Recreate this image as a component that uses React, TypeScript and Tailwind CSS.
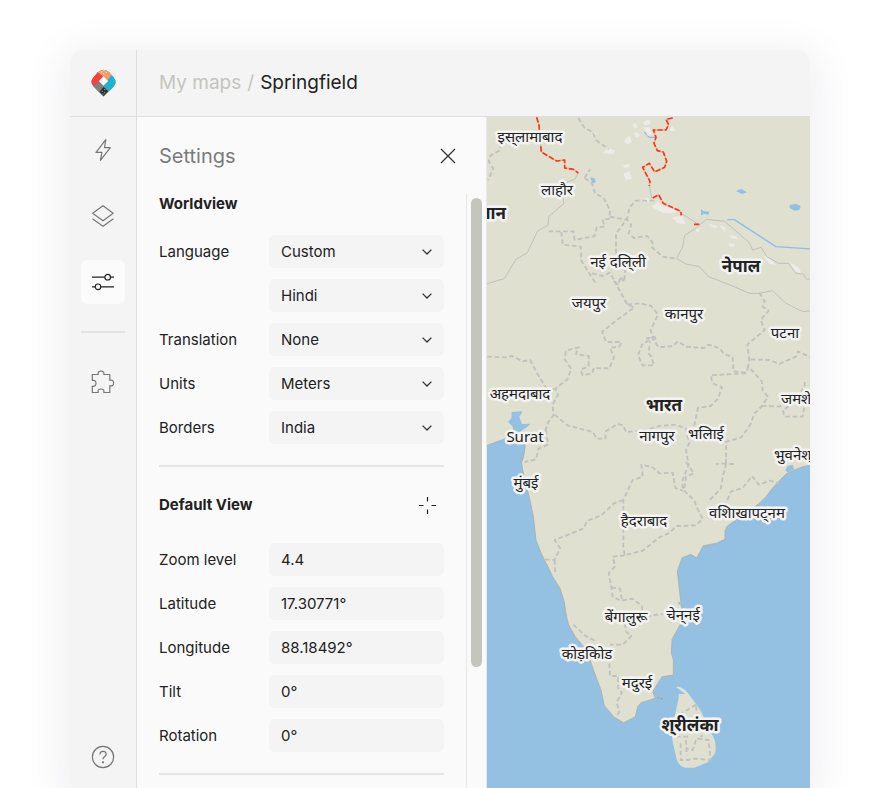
import { useState } from "react";
import type { ReactNode } from "react";

type Label = { text: string; x: number; y: number; bold?: boolean; anchor?: "start" | "middle" | "end" };

const worldview = [
  { id: "language", label: "Language", options: ["Custom", "Automatic"] },
  { id: "custom-language", label: "", options: ["Hindi", "English", "German"] },
  { id: "translation", label: "Translation", options: ["None", "Latin"] },
  { id: "units", label: "Units", options: ["Meters", "Feet"] },
  { id: "borders", label: "Borders", options: ["India", "China", "International"] },
];

const defaultView = [
  { id: "zoom", label: "Zoom level", value: "4.4" },
  { id: "latitude", label: "Latitude", value: "17.30771°" },
  { id: "longitude", label: "Longitude", value: "88.18492°" },
  { id: "tilt", label: "Tilt", value: "0°" },
  { id: "rotation", label: "Rotation", value: "0°" },
];

// \u200c keeps the halant visible instead of forming a conjunct
const labels: Label[] = [
  { text: "इस्\u200cलामाबाद", x: 43, y: 25 },
  { text: "लाहौर", x: 70, y: 78 },
  { text: "पाकिस्तान", x: 19, y: 102, bold: true, anchor: "end" },
  { text: "नई दलि्ली", x: 131, y: 150 },
  { text: "नेपाल", x: 254, y: 155, bold: true },
  { text: "जयपुर", x: 102, y: 191 },
  { text: "कानपुर", x: 197, y: 202 },
  { text: "पटना", x: 298, y: 221 },
  { text: "अहमदाबाद", x: 33, y: 282 },
  { text: "भारत", x: 177, y: 294, bold: true },
  { text: "जमशेदपुर", x: 294, y: 287, anchor: "start" },
  { text: "Surat", x: 38, y: 325 },
  { text: "नागपुर", x: 170, y: 324 },
  { text: "भलिाई", x: 219, y: 322 },
  { text: "भुवनेश्\u200cवर", x: 287, y: 343, anchor: "start" },
  { text: "मुंबई", x: 39, y: 371 },
  { text: "हैदराबाद", x: 157, y: 409 },
  { text: "वशिाखापट्\u200cनम", x: 260, y: 401 },
  { text: "बेंगालुरू", x: 139, y: 505 },
  { text: "चेन्\u200cनई", x: 196, y: 503 },
  { text: "कोड़किोड", x: 100, y: 542 },
  { text: "मदुरई", x: 150, y: 571 },
  { text: "श्\u200cरीलंका", x: 203, y: 614, bold: true },
];

function Logo() {
  return (
    <svg viewBox="0 0 74 84" className="h-7 w-[25px]" aria-hidden="true">
      <path d="M37 83L7 53Q-5 40 6 26L20 10Q37-6 54 10L68 26Q79 40 67 53Z" fill="#808080" />
      <path d="M20 10L6 26Q-3 37 4 48H12L25 35L37 23Z" fill="#fb3f3b" />
      <path d="M20 10Q37-6 54 10L62 19L49 34L37 23Z" fill="#f39c66" />
      <path d="M62 19L68 26Q79 40 67 53L52 67L37 51Z" fill="#19b5d3" />
      <path d="M37 54L51 67L37 81L25 68Z" fill="#2c2c2c" />
      <path d="M37 22L51 36L37 50L23 36Z" fill="#fbfbf8" />
      <path d="M29 9h3M37 5h3M44 10h3M36 14h3" stroke="#fff" strokeWidth="3" />
      <path d="M32 67h3M39 62h3M39 71h3M34 75h3" stroke="#bbb" strokeWidth="3" />
    </svg>
  );
}

function Icon({ children, className = "" }: { children: ReactNode; className?: string }) {
  return (
    <svg
      viewBox="0 0 24 24"
      fill="none"
      stroke="currentColor"
      strokeWidth="1.2"
      strokeLinejoin="round"
      className={`size-6 ${className}`}
      aria-hidden="true"
    >
      {children}
    </svg>
  );
}

function NavButton({ label, active, onClick, children }: { label: string; active: boolean; onClick: () => void; children: ReactNode }) {
  return (
    <button
      type="button"
      aria-label={label}
      onClick={onClick}
      className={`flex size-11 items-center justify-center rounded-md ${active ? "bg-[#fbfbfb] text-[#222]" : "text-[#777]"}`}
    >
      {children}
    </button>
  );
}

function Sidebar() {
  const [active, setActive] = useState("settings");
  return (
    <nav className="flex w-[67px] shrink-0 flex-col items-center border-r border-[#dedede] pt-[11px] pb-[9px]">
      <div className="flex flex-col gap-[22px]">
        <NavButton label="Quick actions" active={active === "quick"} onClick={() => setActive("quick")}>
          <Icon><path d="M14.8 1.6L5 14.4H10.9L9.4 22.4L19.3 9.6H13.5Z" /></Icon>
        </NavButton>
        <NavButton label="Layers" active={active === "layers"} onClick={() => setActive("layers")}>
          <Icon><path d="M12 1.7L22.2 9.3L12 16.7L1.6 9.3ZM1.4 14.7L12 22.3L22.4 14.7" /></Icon>
        </NavButton>
        <NavButton label="Settings" active={active === "settings"} onClick={() => setActive("settings")}>
          <Icon>
            <path d="M1 7.2H13.9M19.5 7.2H23M1 16.8H4.2M9.8 16.8H23" />
            <circle cx="16.7" cy="7.2" r="2.8" />
            <circle cx="7" cy="16.8" r="2.8" />
          </Icon>
        </NavButton>
      </div>
      <hr className="my-[27px] w-11 border-t-2 border-[#e3e3e3]" />
      <NavButton label="Plugins" active={active === "plugins"} onClick={() => setActive("plugins")}>
        <Icon>
          <path d="M1.3 4.5H7.2C6.5 2.5 7.8 1.2 10 1.2S13.5 2.5 12.8 4.5H18.8V10.3C21 9.6 22.6 10.8 22.6 13S21 16.4 18.8 15.7V22.5H12.8C13.5 20.3 12.3 19 10 19S6.5 20.3 7.2 22.5H1.3V16.2C3.5 16.8 5 15.5 5 13.3S3.5 9.9 1.3 10.5Z" />
        </Icon>
      </NavButton>
      <div className="mt-auto">
        <NavButton label="Help" active={active === "help"} onClick={() => setActive("help")}>
          <Icon>
            <circle cx="12" cy="12" r="10.6" />
            <path d="M8.9 9.6C8.9 7.6 10.2 6.3 12.1 6.3S15.2 7.5 15.2 9.2C15.2 11.5 12 11.6 12 14.3" />
            <circle cx="12" cy="17.3" r=".5" fill="currentColor" />
          </Icon>
        </NavButton>
      </div>
    </nav>
  );
}

function SelectField({ id, options, label }: { id: string; options: string[]; label: string }) {
  return (
    <div className="relative w-[175px]">
      <select
        id={id}
        aria-label={label ? undefined : "Custom language"}
        className="h-[33px] w-full appearance-none rounded-md bg-[#f4f4f4] px-3 text-[#222]"
      >
        {options.map((option) => (
          <option key={option}>{option}</option>
        ))}
      </select>
      <svg viewBox="0 0 10 6" fill="none" stroke="#333" strokeWidth="1.3" className="pointer-events-none absolute top-[14px] right-3 h-[6px] w-[10px]" aria-hidden="true">
        <path d="M.6 .6L5 5L9.4 .6" />
      </svg>
    </div>
  );
}

function SettingsPanel() {
  return (
    <section className="flex w-[350px] shrink-0 flex-col border-r border-[#e8e8e8] bg-[#fafafa]">
      <div className="flex h-[77px] items-center justify-between pr-[30px] pl-[22px]">
        <h1 className="text-[20px] leading-6 text-[#7b7b7b]">Settings</h1>
        <button type="button" aria-label="Close" className="flex size-4 items-center justify-center text-[#333]">
          <svg viewBox="0 0 16 16" fill="none" stroke="currentColor" strokeWidth="1.3" className="size-4" aria-hidden="true">
            <path d="M1 1L15 15M15 1L1 15" />
          </svg>
        </button>
      </div>
      <div className="flex grow">
        <form className="grow px-[22px] text-[15px] leading-5 text-[#222]">
          <h2 className="font-bold">Worldview</h2>
          <div className="mt-[21px] flex flex-col gap-[11px]">
            {worldview.map((row) => (
              <div key={row.id} className="flex items-center justify-between">
                {row.label ? <label htmlFor={row.id}>{row.label}</label> : <span />}
                <SelectField id={row.id} options={row.options} label={row.label} />
              </div>
            ))}
          </div>
          <hr className="mt-[21px] border-t-2 border-[#e6e6e6]" />
          <div className="mt-7 flex items-center justify-between">
            <h2 className="font-bold">Default View</h2>
            <button type="button" aria-label="Use current view" className="mr-2 flex size-[17px] items-center justify-center">
              <svg viewBox="0 0 17 17" stroke="#222" strokeWidth="1.2" className="size-[17px]" aria-hidden="true">
                <path d="M8.5 0V4.5M8.5 12.5V17M0 8.5H4.5M12.5 8.5H17" />
              </svg>
            </button>
          </div>
          <div className="mt-7 flex flex-col gap-[11px]">
            {defaultView.map((row) => (
              <div key={row.id} className="flex items-center justify-between">
                <label htmlFor={row.id}>{row.label}</label>
                <input id={row.id} type="text" defaultValue={row.value} className="h-[33px] w-[175px] rounded-md bg-[#f4f4f4] px-3" />
              </div>
            ))}
          </div>
          <hr className="mt-[21px] border-t-2 border-[#e6e6e6]" />
        </form>
        <div className="flex w-5 shrink-0 justify-center border-l border-[#e6e6e6] pt-1">
          <div className="h-[469px] w-[11px] rounded-full bg-[#c4c5be]" />
        </div>
      </div>
    </section>
  );
}

function WorldMap() {
  return (
    <svg
      viewBox="0 0 323 671"
      preserveAspectRatio="xMidYMin slice"
      className="block h-full w-full bg-[#94c0e2]"
      role="img"
      aria-label="Map of India"
    >
      <g transform="translate(-1 -7) scale(.33333)" strokeLinejoin="round">
        {/* mainland */}
        <path
          fill="#dfe0cf"
          stroke="#a9a99f"
          strokeWidth="2"
          d="M-20 0H1000V1060L950 1070L935 1076L900 1092L880 1112L855 1140L840 1160L820 1180L790 1203L755 1225L722 1250L717 1262L717 1288L690 1300L652 1307L632 1344L615 1333L588 1343L574 1384L579 1430L585 1480L590 1520L582 1545L558 1588L556 1630L562 1650L562 1695L528 1700L500 1745L508 1765L465 1778L455 1790L448 1820L413 1838L385 1822L355 1787L345 1740L330 1700L312 1650L295 1612L268 1580L248 1545L240 1510L235 1475L222 1435L200 1400L185 1368L168 1335L150 1290L143 1225L132 1170L122 1130L110 1080L107 1058L114 1035L118 1005L118 975L80 978L0 1007Z"
        />
        <path
          fill="#dfe0cf"
          d="M570 1731Q585 1727 605 1748L625 1775L645 1803L665 1850L682 1880Q694 1907 686 1932L665 1957L625 1973L598 1973Q580 1970 572 1948L561 1900L556 1870L568 1810L578 1765L578 1752L597 1752Z"
        />
        {/* gulf and lakes */}
        <path
          fill="#94c0e2"
          d="M77 906L110 904L100 920L108 942L134 941L120 954L106 962L118 980H85L80 950L66 935L76 925ZM898 1080L905 1068L920 1065L925 1078L905 1088ZM574 1478L583 1476L585 1487ZM312 202L325 205L330 216L320 220ZM750 243L765 236L783 247L768 252ZM911 285L930 281L944 288L940 300L925 302L911 294ZM645 298L654 304L670 305L668 314L654 312L645 316ZM338 1736L345 1738L346 1756L340 1750Z"
        />
        <path d="M475 66L490 82H508M724 329H745L870 410L980 417" fill="none" stroke="#91bde3" strokeWidth="4" />
        <path d="M514 1764L520 1762M524 1768L530 1764" stroke="#a3a49c" strokeWidth="4" />
        {/* glaciers */}
        <path
          fill="#ebebe8"
          d="M440 42L450 40L456 52L444 56ZM470 38L490 28L494 42L478 46ZM472 52L490 52L500 72L486 78ZM550 62L558 48L570 64ZM420 85L432 78L438 96L424 102L414 94ZM442 70L455 66L462 78L450 82ZM366 112L388 122L382 132L350 130ZM410 165L430 162L432 172L416 174ZM430 182L438 206L420 210L412 192ZM468 266L490 264L488 276ZM496 290L515 276L535 290L560 294L580 300L562 310L530 308ZM556 320L590 318L598 342L575 340ZM626 356L640 352L638 370ZM668 342L690 346L694 354L676 352ZM700 346L720 352L716 366ZM728 374L750 378L756 388L738 386ZM728 400L746 402L744 412L730 410ZM830 436L850 442L870 464L850 462ZM910 455L940 475L946 490L924 484ZM790 450L806 456L794 462ZM315 70L330 68L326 80Z"
        />
        {/* country borders */}
        <path
          fill="none"
          stroke="#c0c0bd"
          strokeWidth="3"
          d="M277 188L266 208L244 216L240 236L228 250L234 280L188 320L186 345L154 364L124 428L90 448L55 506L0 522M490 228L497 264M586 310L640 345L662 328L716 334L760 372L790 398L800 420L826 412L842 440L878 460L908 460L930 490L952 492L962 508L975 506M638 350L596 376L590 410L572 446M572 446L600 462L640 470L668 500L740 528L790 550L820 550L860 542L900 580L950 605L975 602"
        />
        {/* state borders */}
        <path
          fill="none"
          stroke="#c1c1c0"
          strokeWidth="5.5"
          strokeDasharray="14 8"
          d="M277 24L296 54L320 66L330 90L368 118M46 100L40 122L14 136L8 154L22 176L6 210M296 204L312 178M296 204L318 220L328 252L352 262L372 300L370 326L350 330L356 350L332 352L326 378L266 390L262 364H188M505 272H450L430 292L424 326L390 370L390 440M372 320L424 330L436 344L428 370L444 384L484 378L500 398L498 412L530 440L572 446M226 366L230 404L284 410L286 452L316 500L330 522M318 490L350 498L372 488L384 510L396 526L404 500L414 516L418 480M384 512L400 540L424 584L445 592L388 634L348 666L360 696H406L400 710L372 714L384 742L370 775L324 774L318 790L290 796L284 780L308 768V738L270 732L278 712L240 722L236 748L256 776L244 808L208 836L216 854L200 884L202 916L186 938L178 962M424 584L460 580L496 588L516 614L494 660L500 686L518 712L560 708L576 694L600 710L654 714L668 704L700 714L712 730L740 742L742 784L780 788L788 770L828 815L830 842L846 860L828 888L804 912L794 942L766 982L720 996V1060M490 690L468 704L456 736L470 766L504 766L496 740L488 730L492 694M480 686L506 680L512 698M820 548L836 574L830 590L848 602L824 630L836 660L784 704L790 750L784 780M794 748L850 750L880 762L930 740L936 724L974 742M4 740L60 742L78 738L110 754L132 750L150 784L182 836L210 838M780 790L740 792L674 796L680 820L708 832L696 866L674 888L636 894L624 950M206 914L244 946L320 966L332 986L358 986L360 964L394 942L412 946L420 966L480 960L520 948L570 944L600 956L610 1000L600 1020L608 1064L590 1110L590 1144M828 888L880 890L910 870L950 868L956 884L950 920L896 920L890 900L910 888M956 816V830L945 844M180 960L186 1004L158 1016L150 1048L116 1056M600 1056L624 1090L600 1100L594 1142L624 1170L636 1200L650 1226L630 1246L572 1248L548 1270L520 1282L470 1322L416 1336L412 1310V1170L440 1110L470 1100L466 1064L500 1072L520 1090L560 1088L568 1134L590 1142M412 1170L384 1180L346 1216L304 1232L292 1256L206 1290L222 1314L206 1350L172 1348M206 1350L208 1394M720 1060L690 1062M744 1062H720L710 1102L704 1136L666 1176M720 1060V1030M724 1170L736 1144L770 1134L798 1098L818 1124L852 1112L880 1120M416 1336L380 1340L388 1368L368 1390L376 1430L380 1460L404 1472L440 1466L468 1488L470 1520L530 1512M376 1432L402 1436L408 1470M262 1544L296 1576L330 1594M416 1540L420 1565L436 1578L410 1604L372 1604M370 1660L372 1698L396 1698V1734L408 1748L392 1776L400 1806L390 1820M570 1880L608 1880M600 1890L602 1936M584 1900V1950H606L626 1946L674 1950L668 1890L636 1886L650 1876M630 1890L620 1920L600 1916M630 1788L634 1820M630 1784L590 1808L570 1812"
        />
        {/* disputed borders */}
        <path
          fill="none"
          stroke="#f7b267"
          strokeWidth="4"
          d="M152 22L159 46L166 126L212 153L236 150V174L262 178L277 189M560 24L540 28L548 44L540 60H502L510 82L504 100L514 122L532 126L542 154L536 172L506 186L490 160L470 172L492 214L490 228M500 264L518 254L532 280L584 304L586 316M624 343H640"
        />
        <path
          fill="none"
          stroke="#f5362e"
          strokeWidth="5"
          strokeDasharray="16 6"
          d="M152 22L159 46L166 126L212 153L236 150V174L262 178L277 189M560 24L540 28L548 44L540 60H502L510 82L504 100L514 122L532 126L542 154L536 172L506 186L490 160L470 172L492 214L490 228M500 264L518 254L532 280L584 304L586 316M624 343H640"
        />
      </g>
      <g fill="#222" stroke="#f3f3f2" strokeWidth="5" strokeLinejoin="round" className="font-['Noto_Sans','Noto_Sans_Devanagari',sans-serif] [paint-order:stroke]">
        {labels.map((label) => (
          <text key={label.text} x={label.x} y={label.y} textAnchor={label.anchor ?? "middle"} className={label.bold ? "text-[17px] font-bold" : "text-[15px]"}>
            {label.text}
          </text>
        ))}
      </g>
    </svg>
  );
}

export default function App() {
  return (
    <div className="flex min-h-screen flex-col overflow-hidden bg-white px-[70px] pt-[50px] font-['Inter',sans-serif]">
      <div className="flex grow flex-col rounded-t-xl shadow-[0_8px_40px_8px_rgba(30,30,70,0.07)]">
        <div className="flex grow flex-col overflow-hidden rounded-t-xl bg-[#f4f4f4]">
          <header className="flex h-[67px] shrink-0 border-b border-[#dedede]">
            <a href="#" aria-label="Home" className="flex w-[67px] shrink-0 items-center justify-center border-r border-[#dedede]">
              <Logo />
            </a>
            <div className="flex items-center gap-[6px] pl-[22px] text-[19px] leading-6 text-[#c4c4c0]">
              <a href="#">My maps</a>
              <span>/</span>
              <span className="text-[#222]">Springfield</span>
            </div>
          </header>
          <div className="flex grow">
            <Sidebar />
            <SettingsPanel />
            <main className="min-w-0 grow basis-0">
              <WorldMap />
            </main>
          </div>
        </div>
      </div>
    </div>
  );
}
